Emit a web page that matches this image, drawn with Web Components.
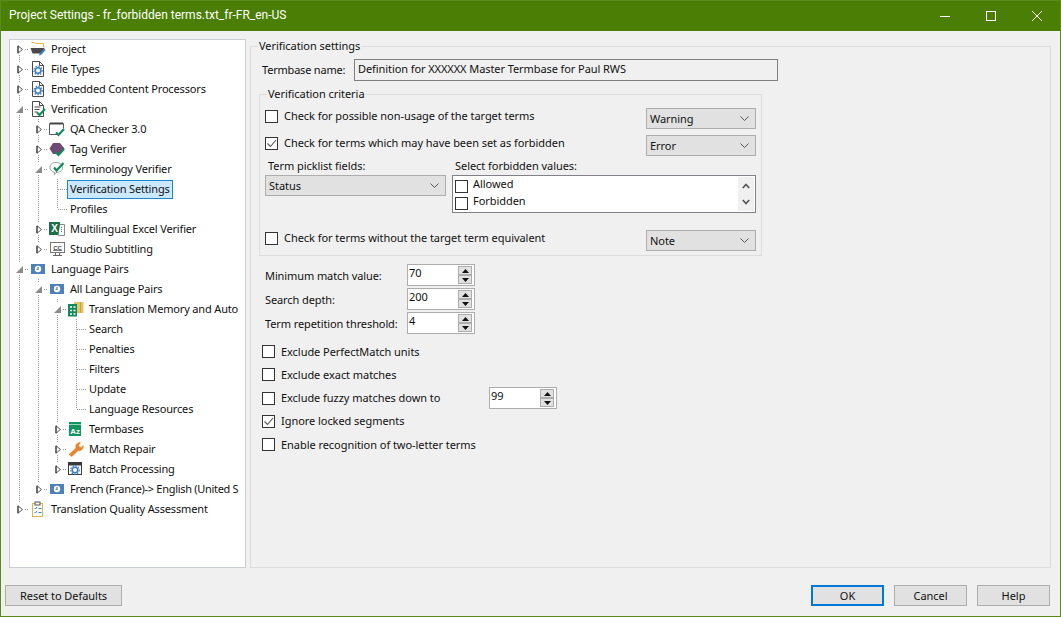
<!DOCTYPE html>
<html>
<head>
<meta charset="utf-8">
<title>Project Settings</title>
<style>
  html, body { margin: 0; height: 100%; overflow: hidden; background: #f0f0f0; }
  body { font: 11px/14px "Noto Sans", "Liberation Sans", sans-serif; color: #111; letter-spacing: -.05px; }
</style>
</head>
<body>
<app-window></app-window>

<script>
const GREEN = '#108a5a';
const check = `<path d="M7 11.5l2.500 2.500 5.500-6" fill="none" stroke="${GREEN}" stroke-width="2.200"/>`;
const gear = (x, y) => `<circle cx="${x}" cy="${y}" r="2.800" fill="none" stroke="#3f7fc4" stroke-width="1.600"/><circle cx="${x}" cy="${y}" r="4.200" fill="none" stroke="#3f7fc4" stroke-width="1.200" stroke-dasharray="1.500 1.300"/>`;
const page = `<path d="M2.500 .5h7l4 4v11h-11z" fill="#fff" stroke="#4a4a4a"/><path d="M9.500 .5v4h4" fill="none" stroke="#4a4a4a"/>`;
const langPair = `<rect x="1" y="3" width="14" height="10" fill="#4d82b8"/><circle cx="8" cy="8" r="3.200" fill="#fff"/><path d="M8 6v2.500h-1.500" fill="none" stroke="#4d82b8" stroke-width="1.200"/>`;

const ICONS = {
  project: `<path d="M1.500 1.500h3l1 1h8v4" fill="#fff" stroke="#e8b53e"/><path d="M.5 7h14l-2 5.500h-10z" fill="#4a4a4a"/><path d="M9 14.500l.6-2 4.600-4.800 1.400 1.400-4.600 4.800z" fill="#3f7fc4"/>`,
  doc: page + gear(8, 9.5),
  verify: page + `<path d="M4.500 6h6M4.500 8.500h5M4.500 11h3" stroke="#4a4a4a"/>` + check,
  qa: `<path d="M.5 2.500h14v5M8 13.500H.5v-11" fill="#fff" stroke="#5a5a5a"/><path d="M1 2.500h13" stroke="#444" stroke-width="2"/>` + check,
  tag: `<path d="M4 2h7l4.500 5.500-4.500 5.500H4L.5 7.500z" fill="#6f4a72"/>` + check,
  term: `<path d="M7 1.500c3.500 0 6.500 1.800 6.500 5s-3 5-6.500 5l-1.500 2v-2.300c-2.800-.6-4.500-2.400-4.500-4.700 0-3.200 2.500-5 6-5z" fill="#fff" stroke="#9a9a9a"/><path d="M5 6.500l2.500 3 7-7.500" fill="none" stroke="${GREEN}" stroke-width="2.200"/>`,
  excel: `<rect x="0" y="1" width="11" height="13" fill="#1e7145"/><text x="5.500" y="11" font-family="Liberation Sans, sans-serif" font-size="10" font-weight="700" text-anchor="middle" fill="#fff">X</text><path d="M11 3.500h4.500v11h-6v-1" fill="#fff" stroke="#888"/><path d="M12.500 6v6" stroke="#666" stroke-dasharray="1 1"/>`,
  cc: `<rect x="1.500" y="1.500" width="14" height="10" fill="#fff" stroke="#777"/><text x="8.500" y="8.500" font-family="Liberation Sans, sans-serif" font-size="6" font-weight="700" text-anchor="middle" fill="#444">CC</text><path d="M4 9.500h9" stroke="#777"/><path d="M6.500 12v2M10.500 12v2M4 14.500h9" stroke="#666"/>`,
  lang: langPair,
  tm: `<rect x="6" y="1" width="9.500" height="11" fill="#e8c468"/><path d="M12.500 1v11" stroke="#c9a040"/><rect x="0" y="3" width="9" height="12.500" fill="#108a5a"/><path d="M2 6h2M2 9.500h2M2 13h2M5.500 6h2M5.500 9.500h2M5.500 13h2" stroke="#fff" stroke-width="1.600"/>`,
  base: `<rect x="1" y="1" width="12" height="14" fill="#0f9560"/><rect x="1" y="3" width="12" height=".8" fill="#bfe6d4"/><text x="7" y="12.500" font-family="Liberation Sans, sans-serif" font-size="8" font-weight="700" text-anchor="middle" fill="#fff">Az</text>`,
  wrench: `<path d="M1 13.500l7-6.500c-.8-2.500.5-5 3.500-5.500l1 .3-2 2.200.8 2 2.200.4 1.700-2c.6 3.200-1.800 5.800-5 5.200l-6.500 6z" fill="#e8842c" stroke="#e8842c" stroke-width=".6"/>`,
  batch: `<rect x=".5" y="1.500" width="13" height="12" fill="#fff" stroke="#3a3a3a"/><rect x="1" y="2" width="12" height="2.500" fill="#3a3a3a"/>` + gear(7, 9),
  assess: `<rect x="2.500" y="2.500" width="10" height="13" fill="#fff" stroke="#e0b44c"/><rect x="5" y="1" width="5" height="3" fill="#fff" stroke="#555"/><path d="M4.500 7l1 1 1.500-2M4.500 11l1 1 1.500-2M8.500 7.500h3M8.500 11.500h3" fill="none" stroke="#3f7fc4"/>`
};

// small helper so every element gets its shadow from a string
function shadow(el, html) {
  const t = document.createElement('template');
  t.innerHTML = html;
  el.attachShadow({ mode: 'open' }).appendChild(t.content.cloneNode(true));
  return el.shadowRoot;
}

class TitleBar extends HTMLElement {
  connectedCallback() {
    shadow(this, `
      <style>
        :host { display: flex; align-items: center; height: 31px; flex: none; background: #4a7e04; border-top: 1px solid #5a8a1a; box-sizing: border-box; color: #fff; }
        .title { flex: 1; padding-left: 8px; font: 12px/16px Roboto, "Noto Sans", sans-serif; letter-spacing: 0; margin-top: -2px; }
        .btn { width: 46px; height: 30px; display: flex; align-items: center; justify-content: center; }
        svg { width: 10px; height: 10px; margin-top: -1px; }
      </style>
      <div class="title"><slot></slot></div>
      <div class="btn"><svg viewBox="0 0 10 10"><path d="M0 5.500h10" stroke="#fff"/></svg></div>
      <div class="btn"><svg viewBox="0 0 10 10"><rect x=".5" y=".5" width="9" height="9" fill="none" stroke="#fff"/></svg></div>
      <div class="btn"><svg viewBox="0 0 10 10"><path d="M0 0l10 10M10 0L0 10" stroke="#fff"/></svg></div>`);
  }
}

class TreeView extends HTMLElement {
  connectedCallback() {
    shadow(this, `
      <style>
        :host { display: block; width: 237px; flex: none; background: #fff; border: 1px solid #c8ced3; box-sizing: border-box; overflow: hidden; letter-spacing: -.16px; }
        .rows { margin-top: -1px; }
      </style>
      <div class="rows"><slot></slot></div>`);
  }
}

// one row of the tree; guides = levels whose vertical dotted line passes through
class TreeRow extends HTMLElement {
  connectedCallback() {
    const level = +this.getAttribute('level') || 0;
    const state = this.getAttribute('state');
    const icon = this.getAttribute('icon');
    const x = l => 9 + 19 * l;
    const guides = (this.getAttribute('guides') || '').split(',').filter(Boolean)
      .map(l => `<i class="v" style="left:${x(+l)}px;top:0;height:20px"></i>`).join('');
    const gap = state ? 6 : 0;
    const own = `${this.hasAttribute('first') ? '' : `<i class="v" style="left:${x(level)}px;top:0;height:${10 - gap}px"></i>`}
      ${this.hasAttribute('last') ? '' : `<i class="v" style="left:${x(level)}px;top:${10 + gap}px;height:${10 - gap}px"></i>`}`;
    const closed = `<svg class="exp shut" viewBox="0 0 7 9" style="width:7px;height:9px"><path d="M1 .8v7.400L5.500 4.500z" fill="#fff" stroke="#555"/><path d="M1 .8v7.400" stroke="#333"/></svg>`;
    const open = `<svg class="exp" viewBox="0 0 7 7" style="width:7px;height:7px"><path d="M7 0v7H0z" fill="#8a8a8a"/></svg>`;
    shadow(this, `
      <style>
        :host { display: block; height: 20px; position: relative; white-space: nowrap; }
        .row { display: flex; align-items: center; height: 20px; padding-left: ${19 * level}px; }
        .cell { width: 18px; flex: none; display: flex; justify-content: center; }
        .icon { width: 16px; height: 16px; flex: none; margin: 0 5px 0 2px; position: relative; }
        .leaf { width: 4px; flex: none; }
        .label { padding: 0 2px; height: 19px; line-height: 16px; box-sizing: border-box; border: 1px solid transparent; margin-left: -3px; }
        :host([selected]) .label { background: #cce8ff; border-color: #1a86d8; }
        i { position: absolute; display: block; }
        .v { width: 1px; background: repeating-linear-gradient(to bottom, #9a9a9a 0 1px, transparent 1px 2px); }
        .h { height: 1px; top: 10px; background: repeating-linear-gradient(to right, #9a9a9a 0 1px, transparent 1px 2px); }
        .exp { position: relative; }
        .shut { left: 1px; }
      </style>
      ${guides}${own}
      <i class="h" style="left:${x(level) + (state ? 6 : 1)}px;width:${state ? 4 : 10}px"></i>
      <div class="row">
        <div class="cell">${state === 'open' ? open : state === 'closed' ? closed : ''}</div>
        ${icon ? `<svg class="icon" viewBox="0 0 16 16">${ICONS[icon]}</svg>` : '<div class="leaf"></div>'}
        <div class="label"><slot></slot></div>
      </div>`);
  }
}

class GroupBox extends HTMLElement {
  connectedCallback() {
    shadow(this, `
      <style>
        :host { display: block; box-sizing: border-box; }
        fieldset { margin: 0; padding: 0; height: 100%; box-sizing: border-box; border: 1px solid #dcdcdc; min-width: 0; }
        legend { margin-left: 7px; padding: 0 1px; line-height: 14px; height: 14px; }
      </style>
      <fieldset><legend>${this.getAttribute('label')}</legend><slot></slot></fieldset>`);
  }
}

class CheckBox extends HTMLElement {
  connectedCallback() {
    const mark = this.hasAttribute('checked')
      ? `<svg viewBox="0 0 11 11"><path d="M1.500 5.500l3 3 5.500-6.500" fill="none" stroke="#555" stroke-width="1.100"/></svg>` : '';
    shadow(this, `
      <style>
        :host { display: flex; align-items: center; gap: var(--check-gap, 6px); height: 14px; white-space: nowrap; }
        .box { width: 13px; height: 13px; box-sizing: border-box; border: 1px solid #333; background: #fff; flex: none; }
        svg { display: block; width: 11px; height: 11px; }
        span { margin-top: var(--label-shift, 0); }
      </style>
      <div class="box">${mark}</div><span><slot></slot></span>`);
  }
}

class ComboBox extends HTMLElement {
  connectedCallback() {
    shadow(this, `
      <style>
        :host { display: flex; align-items: center; justify-content: space-between; height: 21px; box-sizing: border-box; background: #e1e1e1; border: 1px solid #adadad; padding: 0 5px 0 3px; flex: none; }
        svg { width: 9px; height: 5px; margin-right: 1px; }
      </style>
      <span><slot></slot></span>
      <svg viewBox="0 0 9 5"><path d="M.5 .5l4 4 4-4" fill="none" stroke="#555"/></svg>`);
  }
}

class SpinBox extends HTMLElement {
  connectedCallback() {
    shadow(this, `
      <style>
        :host { display: flex; justify-content: space-between; width: 68px; height: 22px; box-sizing: border-box; border: 1px solid #adadad; background: #fff; padding: 1px; flex: none; line-height: 13px; }
        .btns { display: flex; flex-direction: column; justify-content: center; margin-right: 1px; }
        .b { width: 14px; height: 10px; box-sizing: border-box; border: 1px solid #adadad; background: #e1e1e1; display: flex; align-items: center; justify-content: center; }
        svg { width: 7px; height: 4px; }
      </style>
      <span><slot></slot></span>
      <div class="btns">
        <div class="b"><svg viewBox="0 0 7 4"><path d="M3.500 0L7 4H0z" fill="#111"/></svg></div>
        <div class="b"><svg viewBox="0 0 7 4"><path d="M0 0h7L3.500 4z" fill="#111"/></svg></div>
      </div>`);
  }
}

class ListBox extends HTMLElement {
  connectedCallback() {
    shadow(this, `
      <style>
        :host { display: flex; height: 38px; box-sizing: border-box; border: 1px solid #82818a; background: #fff; --check-gap: 5px; --label-shift: -4px; }
        .items { flex: 1; display: flex; flex-direction: column; gap: 3px; padding: 3px 0 0 2px; }
        .bar { width: 16px; margin: 1px 1px 1px 0; background: #f0f0f0; display: flex; flex-direction: column; align-items: center; justify-content: space-between; padding: 6px 0; box-sizing: border-box; }
        svg { width: 8px; height: 6px; }
      </style>
      <div class="items"><slot></slot></div>
      <div class="bar">
        <svg viewBox="0 0 8 6"><path d="M.8 5l3.200-3.500L7.200 5" fill="none" stroke="#555" stroke-width="1.700"/></svg>
        <svg viewBox="0 0 8 6"><path d="M.8 1l3.200 3.500L7.200 1" fill="none" stroke="#555" stroke-width="1.700"/></svg>
      </div>`);
  }
}

class PushButton extends HTMLElement {
  connectedCallback() {
    shadow(this, `
      <style>
        :host { display: flex; align-items: center; justify-content: center; width: 73px; height: 21px; box-sizing: border-box; background: #e1e1e1; border: 1px solid #adadad; flex: none; }
        :host([default]) { border: 2px solid #0078d7; }
      </style>
      <slot></slot>`);
  }
}

class SettingsPane extends HTMLElement {
  connectedCallback() {
    shadow(this, `
      <style>
        :host { display: block; height: 100%; }
        .termbase { display: flex; align-items: center; margin: 6px 0 0 11px; height: 22px; }
        .termbase span { width: 92px; flex: none; letter-spacing: -.2px; }
        .name { width: 424px; height: 22px; box-sizing: border-box; border: 1px solid #7f7f7f; padding-left: 3px; line-height: 17px; background: #f0f0f0; letter-spacing: -.08px; }
        group-box.criteria { margin: 6px 0 0 8px; width: 503px; height: 169px; }
        .rows { padding: 7px 5px 0 5px; display: flex; flex-direction: column; }
        .line { display: flex; justify-content: space-between; align-items: flex-start; height: 21px; }
        .line check-box { margin-top: 1px; }
        .line + .line { margin-top: 6px; }
        .line combo-box { width: 110px; }
        .pick { display: grid; grid-template-columns: 181px 304px; column-gap: 6px; row-gap: 2px; margin: 3px 0 17px; }
        .pick span { padding-left: 3px; height: 14px; }
        .spins { margin: 8px 0 0 14px; display: flex; flex-direction: column; gap: 2px; }
        .spin { display: flex; align-items: center; height: 22px; }
        .spin span { width: 142px; flex: none; padding-top: 2px; letter-spacing: -.1px; }
        .opts { margin: 6px 0 0 11px; }
        .opt { display: flex; align-items: center; height: 23.25px; }
        .opt check-box { width: 227px; flex: none; }
      </style>
      <div class="termbase"><span>Termbase name:</span><div class="name">Definition for XXXXXX Master Termbase for Paul RWS</div></div>
      <group-box class="criteria" label="Verification criteria">
        <div class="rows">
          <div class="line"><check-box>Check for possible non-usage of the target terms</check-box><combo-box>Warning</combo-box></div>
          <div class="line"><check-box checked>Check for terms which may have been set as forbidden</check-box><combo-box>Error</combo-box></div>
          <div class="pick">
            <span>Term picklist fields:</span><span>Select forbidden values:</span>
            <combo-box>Status</combo-box>
            <list-box><check-box>Allowed</check-box><check-box>Forbidden</check-box></list-box>
          </div>
          <div class="line"><check-box>Check for terms without the target term equivalent</check-box><combo-box>Note</combo-box></div>
        </div>
      </group-box>
      <div class="spins">
        <div class="spin"><span>Minimum match value:</span><spin-box>70</spin-box></div>
        <div class="spin"><span>Search depth:</span><spin-box>200</spin-box></div>
        <div class="spin"><span>Term repetition threshold:</span><spin-box>4</spin-box></div>
      </div>
      <div class="opts">
        <div class="opt"><check-box>Exclude PerfectMatch units</check-box></div>
        <div class="opt"><check-box>Exclude exact matches</check-box></div>
        <div class="opt"><check-box>Exclude fuzzy matches down to</check-box><spin-box>99</spin-box></div>
        <div class="opt"><check-box checked>Ignore locked segments</check-box></div>
        <div class="opt"><check-box>Enable recognition of two-letter terms</check-box></div>
      </div>`);
  }
}

class AppWindow extends HTMLElement {
  connectedCallback() {
    shadow(this, `
      <style>
        :host { display: flex; flex-direction: column; width: 1061px; height: 617px; box-sizing: border-box; border: 1px solid #5a8a1a; border-top: 0; background: #f0f0f0; }
        .main { flex: 1; min-height: 0; display: flex; gap: 4px; padding: 8px 9px 0 8px; }
        group-box.outer { flex: 1; min-width: 0; }
        footer { flex: none; height: 48px; box-sizing: border-box; padding: 17px 10px 0 4px; display: flex; gap: 10px; }
        .reset { width: 117px; margin-right: auto; }
      </style>
      <title-bar>Project Settings - fr_forbidden terms.txt_fr-FR_en-US</title-bar>
      <div class="main">
        <tree-view>
          <tree-row first state="closed" icon="project">Project</tree-row>
          <tree-row state="closed" icon="doc">File Types</tree-row>
          <tree-row state="closed" icon="doc">Embedded Content Processors</tree-row>
          <tree-row state="open" icon="verify">Verification</tree-row>
          <tree-row level="1" guides="0" state="closed" icon="qa">QA Checker 3.0</tree-row>
          <tree-row level="1" guides="0" state="closed" icon="tag">Tag Verifier</tree-row>
          <tree-row level="1" guides="0" state="open" icon="term">Terminology Verifier</tree-row>
          <tree-row level="2" guides="0,1" selected>Verification Settings</tree-row>
          <tree-row level="2" guides="0,1" last>Profiles</tree-row>
          <tree-row level="1" guides="0" state="closed" icon="excel">Multilingual Excel Verifier</tree-row>
          <tree-row level="1" guides="0" state="closed" icon="cc" last>Studio Subtitling</tree-row>
          <tree-row state="open" icon="lang">Language Pairs</tree-row>
          <tree-row level="1" guides="0" state="open" icon="lang">All Language Pairs</tree-row>
          <tree-row level="2" guides="0,1" state="open" icon="tm">Translation Memory and Auto</tree-row>
          <tree-row level="3" guides="0,1,2">Search</tree-row>
          <tree-row level="3" guides="0,1,2">Penalties</tree-row>
          <tree-row level="3" guides="0,1,2">Filters</tree-row>
          <tree-row level="3" guides="0,1,2">Update</tree-row>
          <tree-row level="3" guides="0,1,2" last>Language Resources</tree-row>
          <tree-row level="2" guides="0,1" state="closed" icon="base">Termbases</tree-row>
          <tree-row level="2" guides="0,1" state="closed" icon="wrench">Match Repair</tree-row>
          <tree-row level="2" guides="0,1" state="closed" icon="batch" last>Batch Processing</tree-row>
          <tree-row level="1" guides="0" state="closed" icon="lang" last style="letter-spacing:-.3px">French (France)-&gt; English (United S</tree-row>
          <tree-row state="closed" icon="assess" last>Translation Quality Assessment</tree-row>
        </tree-view>
        <group-box class="outer" label="Verification settings"><settings-pane></settings-pane></group-box>
      </div>
      <footer>
        <push-button class="reset">Reset to Defaults</push-button>
        <push-button default>OK</push-button>
        <push-button>Cancel</push-button>
        <push-button>Help</push-button>
      </footer>`);
  }
}

customElements.define('title-bar', TitleBar);
customElements.define('tree-view', TreeView);
customElements.define('tree-row', TreeRow);
customElements.define('group-box', GroupBox);
customElements.define('check-box', CheckBox);
customElements.define('combo-box', ComboBox);
customElements.define('spin-box', SpinBox);
customElements.define('list-box', ListBox);
customElements.define('push-button', PushButton);
customElements.define('settings-pane', SettingsPane);
customElements.define('app-window', AppWindow);
</script>
</body>
</html>
